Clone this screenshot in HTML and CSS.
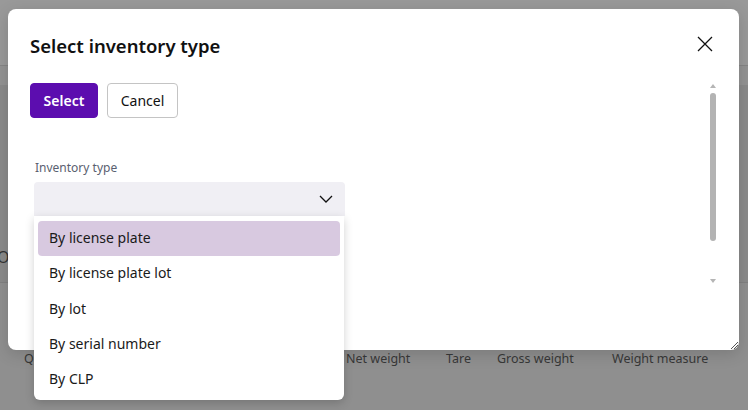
FILE: index.html
```html
<!DOCTYPE html>
<html>
<head>
<meta charset="utf-8">
<link rel="stylesheet" href="styles.css">
</head>
<body>
<div class="page">
  <div class="page-top"></div>
  <div class="page-gap"></div>
  <div class="page-band">
    <div class="band-row1"></div>
    <div class="band-row2"><span class="band-o">O</span></div>
  </div>
  <div class="page-cols">
    <span class="col col-q">Q</span>
    <span class="col col-net">Net weight</span>
    <span class="col col-tare">Tare</span>
    <span class="col col-gross">Gross weight</span>
    <span class="col col-wm">Weight measure</span>
  </div>
</div>

<div class="dialog">
  <div class="dialog-head">
    <h1 class="dialog-title">Select inventory type</h1>
    <button class="close" aria-label="Close">
      <svg width="16" height="16" viewBox="0 0 16 16"><path d="M1 1 L15 15 M15 1 L1 15" stroke="#111" stroke-width="1.3" fill="none"/></svg>
    </button>
  </div>
  <div class="dialog-body">
    <div class="content">
      <div class="actions">
        <button class="btn btn-primary">Select</button>
        <button class="btn btn-default">Cancel</button>
      </div>
      <div class="field">
        <label class="field-label">Inventory type</label>
        <div class="combo">
          <svg class="chev" width="14" height="8" viewBox="0 0 14 8"><path d="M1 1 L7 7 L13 1" stroke="#111" stroke-width="1.3" fill="none"/></svg>
        </div>
      </div>
    </div>
    <div class="scrollbar">
      <div class="sb-up"></div>
      <div class="sb-thumb"></div>
      <div class="sb-down"></div>
    </div>
  </div>
  <div class="resizer">
    <svg width="8" height="8" viewBox="0 0 8 8"><path d="M1 8 L8 1 M4 8 L8 4" stroke="#555" stroke-width="1"/></svg>
  </div>
</div>

<ul class="menu">
  <li class="opt opt-active">By license plate</li>
  <li class="opt">By license plate lot</li>
  <li class="opt">By lot</li>
  <li class="opt">By serial number</li>
  <li class="opt">By CLP</li>
</ul>
</body>
</html>
```

FILE: styles.css
```css
* { box-sizing: border-box; }
html, body { margin: 0; padding: 0; }
body {
  width: 748px;
  height: 410px;
  overflow: hidden;
  background: #8f8f8f;
  font-family: "Noto Sans", "Open Sans", sans-serif;
  position: relative;
}
.page { display: flex; flex-direction: column; }
.page-top { height: 66px; background: #999999; border-bottom: 1px solid #858585; }
.page-gap { height: 19px; background: #939393; }
.page-band { background: #8a8a8a; display: flex; flex-direction: column; }
.band-row1 { height: 150px; }
.band-row2 { height: 48px; border-bottom: 1px solid #808080; display: flex; align-items: flex-start; }
.band-o { font-size: 16px; color: #333; margin-left: -3px; margin-top: 12px; line-height: 20px; }
.page-cols {
  height: 126px;
  background: #8f8f8f;
  position: relative;
  font-size: 12.5px;
  color: #383838;
}
.col { position: absolute; top: 67px; line-height: 18px; }
.col-q { left: 24px; }
.col-net { left: 346px; }
.col-tare { left: 446px; }
.col-gross { left: 497px; }
.col-wm { left: 612px; }

.dialog {
  position: absolute;
  left: 8px;
  top: 9px;
  width: 731px;
  height: 341px;
  background: #fff;
  border-radius: 8px;
  box-shadow: 0 4px 16px rgba(0,0,0,0.15);
  display: flex;
  flex-direction: column;
}
.dialog-head {
  display: flex;
  justify-content: space-between;
  align-items: flex-start;
  padding: 24px 26px 0 22px;
}
.dialog-title {
  margin: 0;
  font-size: 18.5px;
  font-weight: 600;
  color: #111;
  line-height: 26px;
}
.close {
  border: 0;
  background: transparent;
  padding: 0;
  margin-top: 3px;
  width: 16px;
  height: 16px;
  display: flex;
}
.dialog-body {
  display: flex;
  flex: 1;
  justify-content: space-between;
  padding: 0 22px 0 22px;
}
.content { padding-top: 24px; }
.actions { display: flex; gap: 9px; }
.btn {
  height: 35px;
  border-radius: 4px;
  font-family: inherit;
  font-size: 14px;
  padding: 0 12px;
}
.btn-primary {
  background: #5c0daf;
  color: #fff;
  border: 1px solid #5c0daf;
  font-weight: 600;
  width: 68px;
}
.btn-default {
  background: #fff;
  color: #111;
  border: 1px solid #c4c4c4;
  width: 71px;
}
.field { margin-top: 42px; margin-left: 4px; }
.field-label {
  display: block;
  font-size: 12px;
  color: #5a6070;
  line-height: 16px;
  margin-left: 1px;
}
.combo {
  margin-top: 6px;
  width: 311px;
  height: 34px;
  background: #f0eff4;
  border-radius: 4px 4px 0 0;
  display: flex;
  justify-content: flex-end;
  align-items: center;
  padding-right: 12px;
}
.scrollbar {
  width: 8px;
  margin-top: 25px;
  display: flex;
  flex-direction: column;
  align-items: center;
}
.sb-up { width: 0; height: 0; border-left: 3px solid transparent; border-right: 3px solid transparent; border-bottom: 4px solid #b5b5b5; }
.sb-thumb { width: 6px; height: 148px; background: #b3b3b3; border-radius: 3px; margin-top: 5px; }
.sb-down { width: 0; height: 0; border-left: 3px solid transparent; border-right: 3px solid transparent; border-top: 4px solid #b5b5b5; margin-top: 38px; }
.resizer { position: absolute; right: 1px; bottom: 1px; width: 8px; height: 8px; display: flex; }

.menu {
  position: absolute;
  left: 34px;
  top: 216px;
  width: 310px;
  height: 184px;
  margin: 0;
  padding: 5px 4px;
  list-style: none;
  background: #fff;
  border-radius: 0 0 6px 6px;
  box-shadow: 0 3px 10px rgba(0,0,0,0.18);
}
.opt {
  height: 35.3px;
  line-height: 34px;
  padding-left: 11px;
  font-size: 14px;
  color: #1a1a1a;
  border-radius: 4px;
}
.opt-active { background: #d8c9e0; }
```
